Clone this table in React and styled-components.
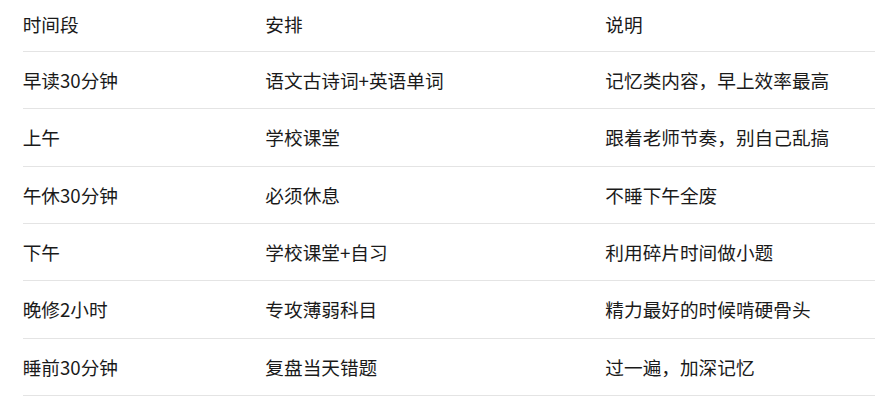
import React from "react";
import styled, { createGlobalStyle } from "styled-components";

const GlobalStyle = createGlobalStyle`
  html, body {
    margin: 0;
    padding: 0;
    background: #ffffff;
  }
  body {
    font-family: "Noto Sans CJK SC", "Noto Sans", sans-serif;
    color: #1a1a1a;
  }
`;

const Page = styled.div`
  padding-left: 22.67px;
  overflow: hidden;
`;

const Table = styled.table`
  width: 100%;
  border-collapse: collapse;
  table-layout: fixed;
  font-size: 18.67px;
`;

const Col = styled.col`
  width: ${(p) => p.$w};
`;

const HeadCell = styled.th`
  height: 48px;
  padding: 0 0 3px 0;
  text-align: left;
  font-weight: 400;
  vertical-align: middle;
  border-bottom: 1px solid #e4e4e4;
  line-height: 1.3;
`;

const Cell = styled.td`
  height: 56.33px;
  padding: 0;
  text-align: left;
  vertical-align: middle;
  border-bottom: 1px solid #e4e4e4;
  line-height: 1.3;
`;

const rows = [
  ["早读30分钟", "语文古诗词+英语单词", "记忆类内容，早上效率最高"],
  ["上午", "学校课堂", "跟着老师节奏，别自己乱搞"],
  ["午休30分钟", "必须休息", "不睡下午全废"],
  ["下午", "学校课堂+自习", "利用碎片时间做小题"],
  ["晚修2小时", "专攻薄弱科目", "精力最好的时候啃硬骨头"],
  ["睡前30分钟", "复盘当天错题", "过一遍，加深记忆"],
];

export default function App() {
  return (
    <>
      <GlobalStyle />
      <Page>
        <Table>
          <colgroup>
            <Col $w="242.67px" />
            <Col $w="340px" />
            <Col $w="auto" />
          </colgroup>
          <thead>
            <tr>
              <HeadCell>时间段</HeadCell>
              <HeadCell>安排</HeadCell>
              <HeadCell>说明</HeadCell>
            </tr>
          </thead>
          <tbody>
            {rows.map((r) => (
              <tr key={r[0]}>
                {r.map((c, i) => (
                  <Cell key={i}>{c}</Cell>
                ))}
              </tr>
            ))}
          </tbody>
        </Table>
      </Page>
    </>
  );
}
